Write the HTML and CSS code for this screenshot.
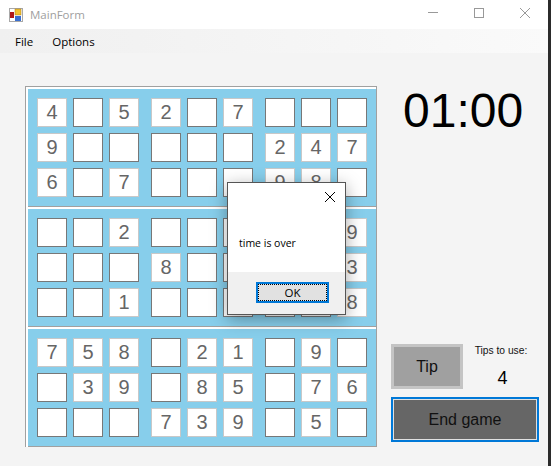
FILE: index.html
```html
<!DOCTYPE html>
<html>
<head>
    <title>MainForm</title>
    <link rel="stylesheet" href="styles.css">
</head>
<body>
    <div class="window">
        <div class="titlebar">
            <svg class="app-icon" width="14" height="14" viewBox="0 0 14 14">
                <rect x="0.5" y="0.5" width="13" height="13" fill="#fff" stroke="#a8a8a8"/>
                <rect x="1" y="4" width="4" height="6" fill="#b01818"/>
                <rect x="6" y="1" width="6" height="6" fill="#f2c230" stroke="#a87a10" stroke-width="0.5"/>
                <rect x="6" y="8" width="6" height="5" fill="#3a6fd0"/>
            </svg>
            <span class="title">MainForm</span>
            <div class="controls">
                <svg width="12" height="12" viewBox="0 0 12 12"><path d="M1 5.5h10" stroke="#999" fill="none"/></svg>
                <svg width="12" height="12" viewBox="0 0 12 12"><rect x="1.5" y="1.5" width="9" height="9" stroke="#999" fill="none"/></svg>
                <svg width="12" height="12" viewBox="0 0 12 12"><path d="M1 1l10 10M11 1L1 11" stroke="#999" fill="none"/></svg>
            </div>
        </div>
        <div class="menubar">
            <span class="menu-item">File</span>
            <span class="menu-item">Options</span>
        </div>
        <div class="main">
            <div class="board">
                <div class="section">
                    <div class="group">
                        <div class="cell given">4</div><div class="cell"></div><div class="cell given">5</div>
                        <div class="cell given">9</div><div class="cell"></div><div class="cell"></div>
                        <div class="cell given">6</div><div class="cell"></div><div class="cell given">7</div>
                    </div>
                    <div class="group">
                        <div class="cell given">2</div><div class="cell"></div><div class="cell given">7</div>
                        <div class="cell"></div><div class="cell"></div><div class="cell"></div>
                        <div class="cell"></div><div class="cell"></div><div class="cell"></div>
                    </div>
                    <div class="group">
                        <div class="cell"></div><div class="cell"></div><div class="cell"></div>
                        <div class="cell given">2</div><div class="cell given">4</div><div class="cell given">7</div>
                        <div class="cell given">9</div><div class="cell given">8</div><div class="cell"></div>
                    </div>
                </div>
                <div class="section">
                    <div class="group">
                        <div class="cell"></div><div class="cell"></div><div class="cell given">2</div>
                        <div class="cell"></div><div class="cell"></div><div class="cell"></div>
                        <div class="cell"></div><div class="cell"></div><div class="cell given">1</div>
                    </div>
                    <div class="group">
                        <div class="cell"></div><div class="cell"></div><div class="cell"></div>
                        <div class="cell given">8</div><div class="cell"></div><div class="cell"></div>
                        <div class="cell"></div><div class="cell"></div><div class="cell"></div>
                    </div>
                    <div class="group">
                        <div class="cell"></div><div class="cell"></div><div class="cell given">9</div>
                        <div class="cell"></div><div class="cell"></div><div class="cell given">3</div>
                        <div class="cell"></div><div class="cell"></div><div class="cell given">8</div>
                    </div>
                </div>
                <div class="section">
                    <div class="group">
                        <div class="cell given">7</div><div class="cell given">5</div><div class="cell given">8</div>
                        <div class="cell"></div><div class="cell given">3</div><div class="cell given">9</div>
                        <div class="cell"></div><div class="cell"></div><div class="cell"></div>
                    </div>
                    <div class="group">
                        <div class="cell"></div><div class="cell given">2</div><div class="cell given">1</div>
                        <div class="cell"></div><div class="cell given">8</div><div class="cell given">5</div>
                        <div class="cell given">7</div><div class="cell given">3</div><div class="cell given">9</div>
                    </div>
                    <div class="group">
                        <div class="cell"></div><div class="cell given">9</div><div class="cell"></div>
                        <div class="cell"></div><div class="cell given">7</div><div class="cell given">6</div>
                        <div class="cell"></div><div class="cell given">5</div><div class="cell"></div>
                    </div>
                </div>
            </div>
            <div class="side">
                <div class="timer">01:00</div>
                <div class="tips-row">
                    <button class="btn-tip">Tip</button>
                    <div class="tips-info">
                        <div class="tips-label">Tips to use:</div>
                        <div class="tips-count">4</div>
                    </div>
                </div>
                <button class="btn-end">End game</button>
            </div>
        </div>

        <div class="dialog">
            <div class="dialog-body">
                <svg class="dialog-close" width="12" height="12" viewBox="0 0 12 12"><path d="M1 1l10 10M11 1L1 11" stroke="#000" fill="none"/></svg>
                <div class="dialog-text">time is over</div>
            </div>
            <div class="dialog-footer">
                <button class="btn-ok"><span class="btn-ok-inner">OK</span></button>
            </div>
        </div>
    </div>
</body>
</html>
```

FILE: styles.css
```css
html, body {
    margin: 0;
    height: 466px;
    overflow: hidden;
}

body {
    background-color: #2b2b2b;
    font-family: "Liberation Sans", Arial, sans-serif;
}

.window {
    position: relative;
    width: 548px;
    height: 466px;
    background-color: #f4f4f4;
}

.titlebar {
    display: flex;
    align-items: center;
    height: 29px;
    padding-left: 9px;
    background-color: #fff;
}

.app-icon {
    margin-right: 7px;
}

.title {
    font-family: "Open Sans", sans-serif;
    font-size: 11.5px;
    color: #a0a0a0;
}

.controls {
    display: flex;
    gap: 34px;
    margin-left: auto;
    margin-right: 17px;
    margin-bottom: 3px;
}

.menubar {
    display: flex;
    gap: 19px;
    align-items: center;
    height: 24px;
    padding-left: 15px;
    background: linear-gradient(to right, #f0f0f0, #f2f2f2 25%, #fafafa 100%);
    font-family: "Open Sans", sans-serif;
    font-size: 11.5px;
    color: #000;
}

.main {
    display: flex;
    padding: 33px 0 0 25px;
}

.board {
    width: 348px;
    border-top: 1px solid #a0a0a0;
    border-left: 1px solid #a0a0a0;
    border-right: 1px solid #a0a0a0;
    padding: 2px 0 1px 2px;
    background-color: #fff;
}

.section {
    display: flex;
    gap: 12px;
    padding: 9px;
    margin-bottom: 3px;
    background-color: #87ceeb;
    box-shadow: 0 1px 0 #a0a0a0;
}

.section:last-child {
    margin-bottom: 0;
}

.group {
    display: grid;
    grid-template-columns: repeat(3, 30px);
    grid-auto-rows: 29px;
    gap: 6px;
}

.cell {
    box-sizing: border-box;
    display: flex;
    align-items: center;
    justify-content: center;
    border: 1px solid #777;
    background-color: #fff;
    font-size: 20px;
    color: #666;
}

.given {
    border-color: #c8c8c8;
}

.side {
    display: flex;
    flex-direction: column;
    margin-left: 14px;
}

.timer {
    margin: 0 0 0 12px;
    font-size: 48px;
    line-height: 50px;
    color: #000;
}

.tips-row {
    display: flex;
    margin-top: 208px;
}

button {
    font-family: "Liberation Sans", Arial, sans-serif;
    padding: 0;
    cursor: pointer;
}

.btn-tip {
    box-sizing: border-box;
    width: 72px;
    height: 45px;
    border: 3px solid #c4c4c4;
    background-color: #a0a0a0;
    font-size: 16px;
    color: #111;
}

.tips-info {
    width: 60px;
    margin-left: 8px;
    text-align: center;
}

.tips-label {
    margin-top: 1px;
    font-size: 10.25px;
    color: #111;
}

.tips-count {
    margin-top: 12px;
    padding-left: 3px;
    font-size: 18px;
    color: #000;
}

.btn-end {
    box-sizing: border-box;
    width: 148px;
    height: 45px;
    margin-top: 8px;
    border: 2px solid #0078d7;
    outline: 1px solid #e0e0e0;
    outline-offset: -3px;
    background-color: #666;
    font-size: 16px;
    color: #111;
}

.dialog {
    position: absolute;
    left: 227px;
    top: 182px;
    box-sizing: border-box;
    display: flex;
    flex-direction: column;
    width: 119px;
    height: 133px;
    border: 1px solid #555;
    background-color: #fff;
    box-shadow: 0 4px 16px rgba(0, 0, 0, 0.35);
    font-family: "Open Sans", sans-serif;
}

.dialog-body {
    position: relative;
    flex: 1;
}

.dialog-close {
    position: absolute;
    top: 8px;
    right: 9px;
}

.dialog-text {
    margin: 53px 0 0 11px;
    font-size: 10.5px;
    color: #000;
}

.dialog-footer {
    display: flex;
    justify-content: flex-end;
    height: 42px;
    padding: 10px 16px 0 0;
    box-sizing: border-box;
    background-color: #f0f0f0;
}

.btn-ok {
    box-sizing: border-box;
    width: 73px;
    height: 21px;
    border: 2px solid #0078d7;
    background-color: #e1e1e1;
    font-family: "Open Sans", sans-serif;
    font-size: 11.5px;
    color: #000;
}

.btn-ok-inner {
    display: flex;
    align-items: center;
    justify-content: center;
    height: 100%;
    border: 1px dotted #000;
    box-sizing: border-box;
}
```
